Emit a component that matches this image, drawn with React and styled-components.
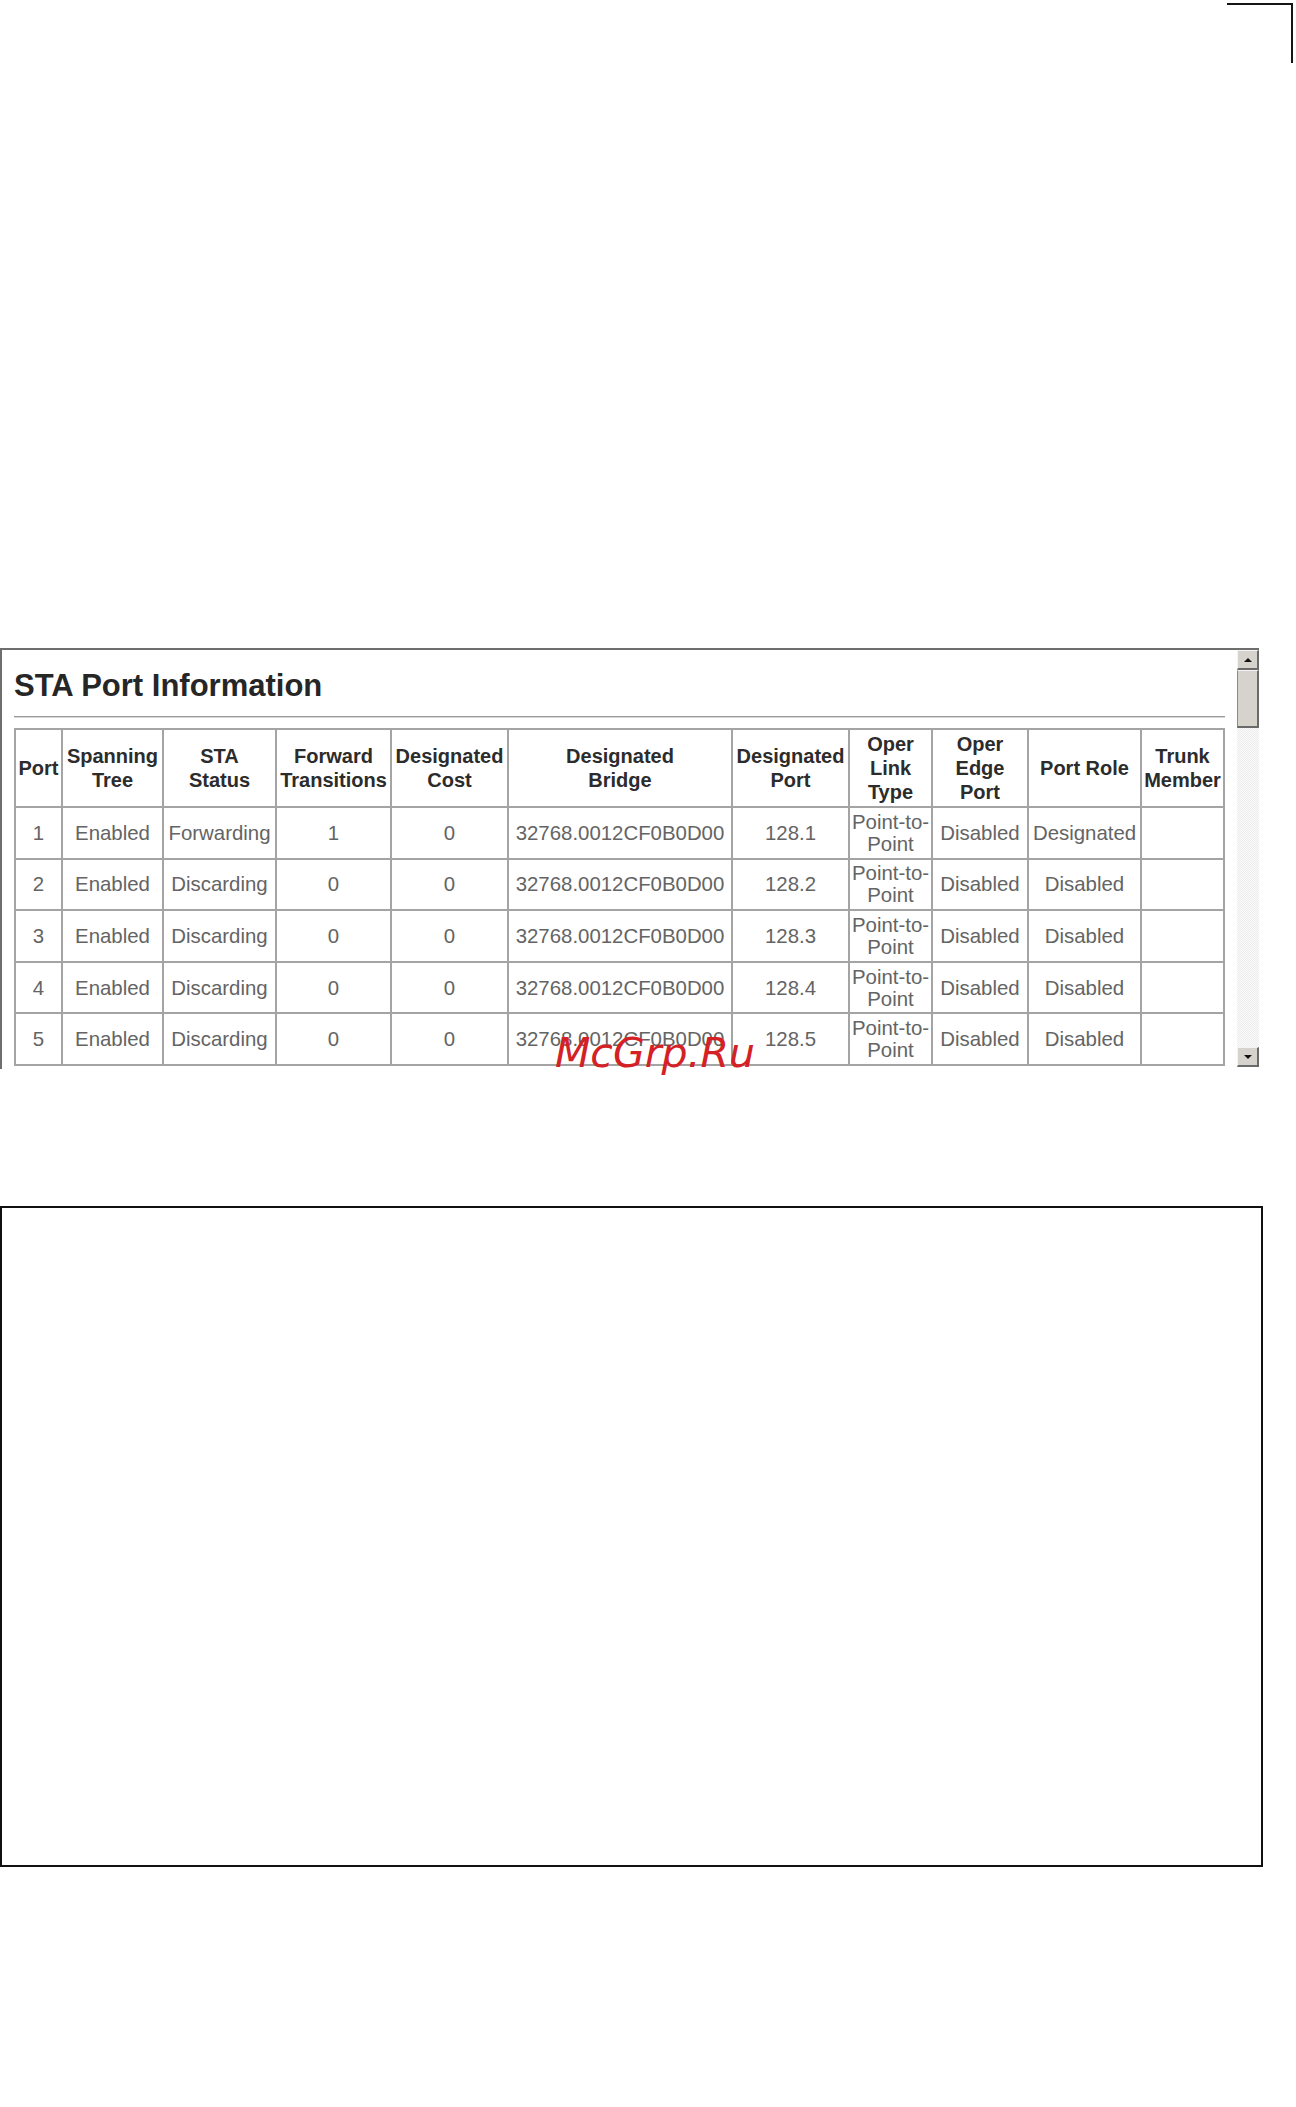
import React from 'react';
import styled, { createGlobalStyle } from 'styled-components';

const columns = [
  { label: ['Port'], width: 47 },
  { label: ['Spanning', 'Tree'], width: 101 },
  { label: ['STA', 'Status'], width: 113 },
  { label: ['Forward', 'Transitions'], width: 115 },
  { label: ['Designated', 'Cost'], width: 117 },
  { label: ['Designated', 'Bridge'], width: 224 },
  { label: ['Designated', 'Port'], width: 117 },
  { label: ['Oper', 'Link', 'Type'], width: 83 },
  { label: ['Oper', 'Edge', 'Port'], width: 96 },
  { label: ['Port Role'], width: 113 },
  { label: ['Trunk', 'Member'], width: 83 },
];

const rows = [1, 2, 3, 4, 5].map((port) => [
  port,
  'Enabled',
  port === 1 ? 'Forwarding' : 'Discarding',
  port === 1 ? '1' : '0',
  '0',
  '32768.0012CF0B0D00',
  `128.${port}`,
  ['Point-to-', 'Point'],
  'Disabled',
  port === 1 ? 'Designated' : 'Disabled',
  '',
]);

// renders an array as separate lines
const lines = (value) =>
  Array.isArray(value)
    ? value.map((part, i) => (
        <React.Fragment key={i}>
          {i > 0 && <br />}
          {part}
        </React.Fragment>
      ))
    : value;

const App = () => {
  return (
    <React.Fragment>
      <GlobalStyle />
      <Page>
        <TopBar>
          <CropMark />
        </TopBar>

        <Panel>
          <PanelBody>
            <Title>STA Port Information</Title>
            <Rule />
            <Table>
              <colgroup>
                {columns.map((col, i) => (
                  <col key={i} style={{ width: `${col.width}px` }} />
                ))}
              </colgroup>
              <thead>
                <tr>
                  {columns.map((col, i) => (
                    <HeadCell key={i}>{lines(col.label)}</HeadCell>
                  ))}
                </tr>
              </thead>
              <tbody>
                {rows.map((row, r) => (
                  <Row key={r}>
                    {row.map((value, c) => (
                      <Cell key={c} $wrap={Array.isArray(value)}>
                        {lines(value)}
                      </Cell>
                    ))}
                  </Row>
                ))}
              </tbody>
            </Table>
          </PanelBody>
          <Scrollbar>
            <ScrollButton>
              <Arrow $up />
            </ScrollButton>
            <Thumb />
            <Track />
            <ScrollButton>
              <Arrow />
            </ScrollButton>
          </Scrollbar>
        </Panel>

        <Watermark>McGrp.Ru</Watermark>

        <EmptyBox />
      </Page>
    </React.Fragment>
  );
};

export default App;

const GlobalStyle = createGlobalStyle`
  html, body {
    margin: 0;
    padding: 0;
    background: #fff;
  }
  body {
    font-family: "Liberation Sans", Arial, sans-serif;
  }
  * {
    box-sizing: border-box;
  }
`;

const Page = styled.div`
  position: relative;
  width: 1296px;
  height: 2107px;
  padding-top: 3px;
  overflow: hidden;
`;

const TopBar = styled.div`
  display: flex;
  justify-content: flex-end;
  padding-right: 3px;
`;

const CropMark = styled.div`
  width: 66px;
  height: 60px;
  border-top: 2px solid #151515;
  border-right: 2px solid #151515;
`;

const Panel = styled.div`
  display: flex;
  width: 1259px;
  height: 421px;
  margin-top: 585px;
  border-top: 2px solid #6e6e6e;
  border-left: 2px solid #6e6e6e;
  overflow: hidden;
`;

const PanelBody = styled.div`
  flex: 1;
  padding: 18px 0 0 12px;
  overflow: hidden;
`;

const Title = styled.h1`
  margin: 0;
  font-size: 31px;
  line-height: 36px;
  font-weight: bold;
  color: #262626;
`;

const Rule = styled.div`
  width: 1211px;
  margin: 12px 0 10px;
  border-top: 1px solid #9a9a9a;
  border-bottom: 1px solid #d8d8d8;
`;

const Table = styled.table`
  width: 1209px;
  table-layout: fixed;
  border-collapse: collapse;
  border: 2px solid #a4a4a4;
`;

const HeadCell = styled.th`
  height: 78px;
  padding: 0;
  border: 2px solid #a4a4a4;
  font-size: 20px;
  line-height: 24px;
  font-weight: bold;
  color: #2c2c2c;
  text-align: center;
  vertical-align: middle;
  white-space: nowrap;
`;

const Row = styled.tr`
  height: 51.6px;
`;

const Cell = styled.td`
  padding: 0;
  border: 2px solid #a4a4a4;
  font-size: 20.4px;
  line-height: ${(p) => (p.$wrap ? '22px' : '24px')};
  color: #646464;
  text-align: center;
  vertical-align: middle;
  white-space: nowrap;
  overflow: visible;
`;

const Scrollbar = styled.div`
  display: flex;
  flex-direction: column;
  width: 22px;
  padding-bottom: 2px;
`;

const ScrollButton = styled.div`
  display: flex;
  align-items: center;
  justify-content: center;
  height: 20px;
  background: #d6d3cc;
  border-top: 1px solid #f4f4f4;
  border-left: 1px solid #f4f4f4;
  border-right: 2px solid #6a6a6a;
  border-bottom: 2px solid #6a6a6a;
`;

const Arrow = styled.span`
  width: 0;
  height: 0;
  border-left: 4px solid transparent;
  border-right: 4px solid transparent;
  ${(p) =>
    p.$up ? 'border-bottom: 4px solid #111;' : 'border-top: 4px solid #111;'}
`;

const Thumb = styled.div`
  height: 58px;
  background: #d6d3cc;
  border-top: 1px solid #f4f4f4;
  border-left: 1px solid #8a8a8a;
  border-right: 2px solid #6a6a6a;
  border-bottom: 2px solid #6a6a6a;
`;

const Track = styled.div`
  flex: 1;
  background: repeating-conic-gradient(#ececec 0 25%, #fbfbfb 0 50%) 0 0 / 2px 2px;
`;

const Watermark = styled.div`
  position: absolute;
  left: 555px;
  top: 1033px;
  font-family: "DejaVu Sans", Verdana, sans-serif;
  font-style: italic;
  font-size: 41px;
  line-height: 41px;
  color: #d42126;
  pointer-events: none;
`;

const EmptyBox = styled.div`
  width: 1263px;
  height: 661px;
  margin-top: 137px;
  border: 2px solid #111;
`;
